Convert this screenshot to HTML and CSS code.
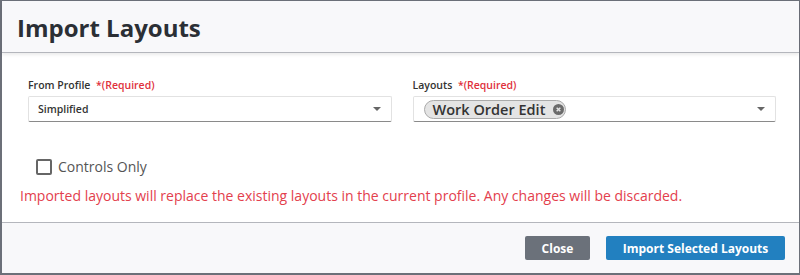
FILE: index.html
```html
<!DOCTYPE html>
<html lang="en">
<head>
    <meta charset="UTF-8">
    <title>Import Layouts</title>
    <link rel="stylesheet" href="styles.css">
</head>
<body>
    <div class="modal">
        <div class="modal-header">
            <h1>Import Layouts</h1>
        </div>
        <div class="modal-body">
            <div class="fields">
                <div class="field">
                    <label>From Profile <span class="req">*(Required)</span></label>
                    <div class="select">
                        <span class="select-value">Simplified</span>
                        <span class="caret"></span>
                    </div>
                </div>
                <div class="field">
                    <label>Layouts <span class="req">*(Required)</span></label>
                    <div class="select">
                        <span class="tag">Work Order Edit
                            <svg class="tag-x" width="11" height="11" viewBox="0 0 12 12">
                                <circle cx="6" cy="6" r="6" fill="#6b6b6b"/>
                                <path d="M4 4 L8 8 M8 4 L4 8" stroke="#e4e4e4" stroke-width="1.6"/>
                            </svg>
                        </span>
                        <span class="caret"></span>
                    </div>
                </div>
            </div>
            <label class="check">
                <span class="box"></span>
                Controls Only
            </label>
            <p class="warning">Imported layouts will replace the existing layouts in the current profile. Any changes will be discarded.</p>
        </div>
        <div class="modal-footer">
            <button class="button close">Close</button>
            <button class="button primary">Import Selected Layouts</button>
        </div>
    </div>
</body>
</html>
```

FILE: styles.css
```css
body {
    margin: 0;
    font-family: "Open Sans", Arial, sans-serif;
    background: #fff;
}
.modal {
    width: 800px;
    height: 275px;
    box-sizing: border-box;
    border: 1px solid #6c7079;
    border-left-width: 2px;
    border-bottom-width: 2px;
    display: flex;
    flex-direction: column;
}
.modal-header {
    height: 51px;
    background: #f8f8fa;
    border-bottom: 1px solid #b4b6bc;
    box-shadow: 0 2px 3px rgba(0, 0, 0, 0.08);
    display: flex;
    align-items: center;
    padding-left: 15px;
}
h1 {
    margin: 0;
    font-size: 24px;
    font-weight: 700;
    color: #2b2f35;
    position: relative;
    top: 1px;
}
.modal-body {
    flex: 1;
    padding: 25px 0 0 18px;
}
.fields {
    display: flex;
    gap: 21px;
    padding-left: 8px;
    width: 748px;
}
.field {
    flex: 1;
}
.field label {
    display: block;
    font-size: 10.5px;
    font-weight: 600;
    color: #333;
    margin-bottom: 4px;
    line-height: 14px;
}
.req {
    color: #e0303c;
    margin-left: 3px;
}
.select {
    height: 26px;
    box-sizing: border-box;
    border: 1px solid #e2e2e2;
    border-bottom: 1px solid #8a8a8a;
    border-radius: 2px;
    display: flex;
    align-items: center;
    padding: 0 8px 0 9px;
    background: #fff;
}
.select-value {
    flex: 1;
    font-size: 10.5px;
    font-weight: 600;
    color: #333;
}
.caret {
    margin-left: auto;
    width: 0;
    height: 0;
    border-left: 4px solid transparent;
    border-right: 4px solid transparent;
    border-top: 4px solid #666;
    margin-right: 2px;
}
.tag {
    display: inline-flex;
    align-items: center;
    gap: 8px;
    height: 19px;
    box-sizing: border-box;
    padding: 0 1px 0 8px;
    margin-left: 1px;
    background: #e4e4e4;
    border: 1px solid #aaa;
    border-radius: 10px;
    font-size: 14.5px;
    font-weight: 600;
    color: #333;
}
.check {
    display: flex;
    align-items: center;
    gap: 6px;
    margin: 35px 0 0 16px;
    font-size: 14px;
    color: #555;
}
.box {
    width: 12px;
    height: 12px;
    border: 2px solid #666;
    border-radius: 2px;
}
.warning {
    margin: 10px 0 0 0;
    font-size: 14px;
    color: #e3404d;
}
.modal-footer {
    height: 50px;
    background: #f8f8fa;
    border-top: 1px solid #b4b6bc;
    display: flex;
    align-items: center;
    justify-content: flex-end;
    gap: 16px;
    padding-right: 14px;
}
.button {
    height: 24px;
    border: none;
    border-radius: 2px;
    color: #fff;
    font-family: "Open Sans", Arial, sans-serif;
    font-size: 12px;
    font-weight: 700;
    cursor: pointer;
}
.close {
    width: 65px;
    background: #6b717a;
}
.primary {
    width: 179px;
    background: #2280c0;
}
```
